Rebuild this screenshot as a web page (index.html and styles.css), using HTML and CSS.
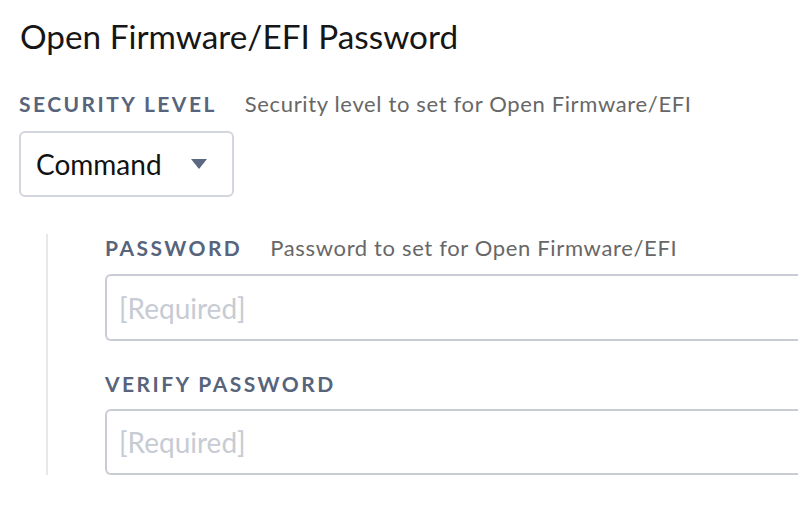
FILE: index.html
```html
<!DOCTYPE html>
<html>
<head>
<meta charset="utf-8">
<link rel="stylesheet" href="styles.css">
</head>
<body>
<div class="page">
  <h1 class="title">Open Firmware/EFI Password</h1>
  <div class="field top-field">
    <div class="label-row">
      <span class="label">SECURITY LEVEL</span>
      <span class="desc">Security level to set for Open Firmware/EFI</span>
    </div>
    <div class="select">
      <span class="select-value">Command</span>
      <svg class="caret" width="16" height="10" viewBox="0 0 16 10"><path d="M0 0 H16 L8 10 Z" fill="#5b6882"/></svg>
    </div>
  </div>
  <div class="nested">
    <div class="field">
      <div class="label-row">
        <span class="label">PASSWORD</span>
        <span class="desc">Password to set for Open Firmware/EFI</span>
      </div>
      <div class="input first-input"><span class="placeholder">[Required]</span></div>
    </div>
    <div class="field second">
      <div class="label-row">
        <span class="label">VERIFY PASSWORD</span>
      </div>
      <div class="input second-input"><span class="placeholder">[Required]</span></div>
    </div>
  </div>
</div>
</body>
</html>
```
FILE: styles.css
```css
html, body {
  margin: 0;
  padding: 0;
  background: #ffffff;
  overflow: hidden;
}
body {
  font-family: Lato, "Noto Sans", sans-serif;
  color: #1c1c1c;
}
.page {
  width: 900px;
  padding: 16px 0 0 19px;
}
.title {
  margin: 0;
  font-weight: 400;
  font-size: 33.3px;
  line-height: 40px;
  padding-left: 1px;
  color: #161616;
}
.top-field {
  margin-top: 36px;
}
.label-row {
  display: flex;
  align-items: baseline;
  height: 24px;
  line-height: 24px;
}
.label {
  font-weight: 700;
  font-size: 21px;
  letter-spacing: 2.45px;
  color: #57647c;
  margin-right: 28px;
}
.desc {
  font-size: 22px;
  letter-spacing: 0.65px;
  color: #676767;
}
.select {
  margin-top: 15px;
  width: 215px;
  height: 66px;
  box-sizing: border-box;
  border: 2px solid #d3d6dc;
  border-radius: 6px;
  display: flex;
  align-items: center;
  padding-left: 15px;
}
.select-value {
  font-size: 28px;
  color: #111;
}
.caret {
  display: block;
  margin-left: 29px;
}
.nested {
  margin-top: 37px;
  margin-left: 27px;
  border-left: 2px solid #e6e8ec;
  padding-left: 57px;
  padding-top: 2px;
}
.input {
  height: 67px;
  box-sizing: border-box;
  border: 2px solid #c9ccd4;
  border-right: none;
  border-radius: 6px 0 0 6px;
  display: flex;
  align-items: center;
  padding-left: 12px;
}
.first-input {
  margin-top: 14px;
}
.second-input {
  margin-top: 13px;
  height: 66px;
}
.placeholder {
  font-size: 28px;
  color: #c7cbd3;
}
.second {
  margin-top: 31px;
}
```
